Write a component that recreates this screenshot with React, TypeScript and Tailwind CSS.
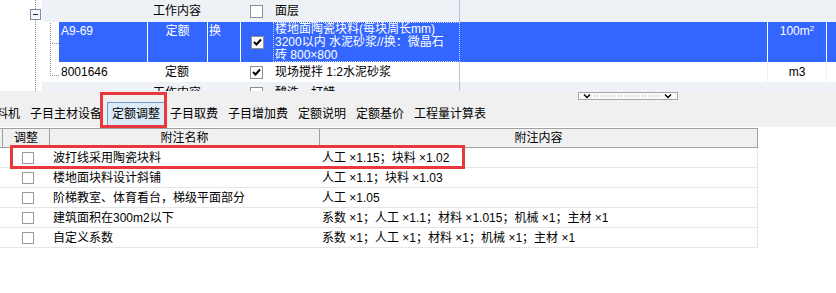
import React from "react";

const FONT = "font-['Liberation_Sans','Noto_Sans_CJK_SC',sans-serif]";

function Check({ checked }: { checked: boolean }) {
  return (
    <div className="w-[13px] h-[13px] border border-[#8e8f8f] bg-white flex items-center justify-center shrink-0">
      {checked && (
        <svg width="9" height="8" viewBox="0 0 9 8">
          <path d="M1 4 L3.5 6.5 L8 1.5" stroke="#000" strokeWidth="2" fill="none" />
        </svg>
      )}
    </div>
  );
}

function Box() {
  return <div className="w-[12px] h-[12px] border border-[#9a9a9a] bg-white shrink-0" />;
}

const rows = [
  { name: "波打线采用陶瓷块料", content: "人工 ×1.15；块料 ×1.02" },
  { name: "楼地面块料设计斜铺", content: "人工 ×1.1；块料 ×1.03" },
  { name: "阶梯教室、体育看台，梯级平面部分", content: "人工 ×1.05" },
  { name: "建筑面积在300m2以下", content: "系数 ×1；人工 ×1.1；材料 ×1.015；机械 ×1；主材 ×1" },
  { name: "自定义系数", content: "系数 ×1；人工 ×1；材料 ×1；机械 ×1；主材 ×1" },
];

const tabs = ["子目取费", "子目增加费", "定额说明", "定额基价", "工程量计算表"];

export default function App() {
  return (
    <div className={`relative w-[836px] h-[293px] bg-white overflow-hidden text-[12px] text-black ${FONT}`}>
      {/* top tree grid */}
      <div className="relative h-[91px] overflow-hidden">
        <div className="flex flex-col">
          {/* row 1 */}
          <div className="flex h-[22px] ml-[42px] bg-[#eef1f6] items-center whitespace-nowrap">
            <div className="w-[105px] shrink-0" />
            <div className="w-[60px] shrink-0 text-center">工作内容</div>
            <div className="w-[33px] shrink-0" />
            <div className="w-[33px] shrink-0 flex justify-center"><Check checked={false} /></div>
            <div className="w-[187px] shrink-0 h-full pl-[2px] leading-[22px] border-r border-[#b8c4d4]">面层</div>
          </div>
          {/* row 2 selected */}
          <div className="flex h-[40px] ml-[59px] bg-[#3366ff] text-white whitespace-nowrap">
            <div className="w-[88px] shrink-0 pl-[2px] pt-[2px] leading-[14px]">A9-69</div>
            <div className="w-[60px] shrink-0 border-l border-white text-center pt-[2px] leading-[14px]">定额</div>
            <div className="w-[33px] shrink-0 border-l border-white pl-[1px] pt-[2px] leading-[14px]">换</div>
            <div className="w-[33px] shrink-0 border-l border-white flex items-center justify-center"><Check checked={true} /></div>
            <div className="w-[187px] shrink-0 border border-dotted border-[#c9d6ff] pl-[1px] leading-[13px] text-[12px]">
              <div>楼地面陶瓷块料(每块周长mm)</div>
              <div>3200以内 水泥砂浆//换：微晶石</div>
              <div>砖 800×800</div>
            </div>
            <div className="w-[307px] shrink-0" />
            <div className="w-[59px] shrink-0 border-l border-white text-center pt-[2px] leading-[14px]">
              100m<sup className="text-[8px]">2</sup>
            </div>
            <div className="flex-1 border-l border-white" />
          </div>
          {/* row 3 */}
          <div className="flex h-[20px] ml-[59px] bg-white items-center whitespace-nowrap">
            <div className="w-[88px] shrink-0 pl-[2px]">8001646</div>
            <div className="w-[60px] shrink-0 text-center">定额</div>
            <div className="w-[33px] shrink-0" />
            <div className="w-[33px] shrink-0 flex justify-center"><Check checked={true} /></div>
            <div className="w-[187px] shrink-0 h-full pl-[2px] leading-[20px] border-r border-[#b8c4d4]">现场搅拌 1:2水泥砂浆</div>
            <div className="w-[307px] shrink-0 h-full" />
            <div className="w-[59px] shrink-0 h-full leading-[20px] border-l border-[#f0f0f0] text-center">m3</div>
            <div className="flex-1 h-full border-l border-[#f0f0f0]" />
          </div>
          {/* row 4 */}
          <div className="flex h-[22px] ml-[42px] bg-[#eef1f6] items-center whitespace-nowrap">
            <div className="w-[105px] shrink-0" />
            <div className="w-[60px] shrink-0 text-center">工作内容</div>
            <div className="w-[33px] shrink-0" />
            <div className="w-[33px] shrink-0 flex justify-center"><Check checked={false} /></div>
            <div className="w-[187px] shrink-0 h-full pl-[2px] leading-[22px] border-r border-[#b8c4d4]">酸洗、打蜡</div>
          </div>
        </div>
        {/* tree lines */}
        <svg className="absolute left-0 top-0" width="60" height="91">
          <line x1="35.5" y1="0" x2="35.5" y2="91" stroke="#8a8a8a" strokeDasharray="1 1" />
          <line x1="50.5" y1="23" x2="50.5" y2="75" stroke="#8a8a8a" strokeDasharray="1 1" />
          <line x1="50" y1="43.5" x2="59" y2="43.5" stroke="#8a8a8a" strokeDasharray="1 1" />
          <line x1="50" y1="75.5" x2="59" y2="75.5" stroke="#8a8a8a" strokeDasharray="1 1" />
          <rect x="30.5" y="9.5" width="10" height="10" fill="#f4f6fa" stroke="#7d8aa3" />
          <line x1="33" y1="14.5" x2="38" y2="14.5" stroke="#1f2a44" />
        </svg>
      </div>

      {/* splitter */}
      <div className="h-[9px] bg-[#f0f0f0] flex">
        <div className="ml-[578px] mt-[1px]">
          <svg width="100" height="8" viewBox="0 0 100 8">
            <rect x="0.5" y="0.5" width="99" height="7" fill="#fafafa" stroke="#a8a8a8" />
            <path d="M6 2.5 L9 5.5 L12 2.5" stroke="#000" strokeWidth="1.4" fill="none" />
            <path d="M87 2.5 L90 5.5 L93 2.5" stroke="#000" strokeWidth="1.4" fill="none" />
            <line x1="16" y1="4" x2="84" y2="4" stroke="#9a9a9a" strokeDasharray="1 2" />
          </svg>
        </div>
      </div>

      {/* toolbar */}
      <div className="h-[27px] bg-[#f0f0f0] flex items-center whitespace-nowrap overflow-hidden">
        <div className="ml-[-9px] px-[5px]">料机</div>
        <div className="px-[5px]">子目主材设备</div>
        <div className="h-[24px] px-[4px] border border-[#6d9ccc] bg-[#dcebf8] flex items-center">定额调整</div>
        {tabs.map((t) => (
          <div key={t} className="px-[5px] first:ml-[1px]">{t}</div>
        ))}
      </div>

      {/* adjustment table */}
      <div className="w-[758px] mt-[1px]">
        <div className="flex h-[20px] bg-[#f0f0f0] border-y border-[#a0a0a0] border-r items-center whitespace-nowrap">
          <div className="w-[3px] h-full border-r border-[#a0a0a0] shrink-0" />
          <div className="w-[47px] h-full border-r border-[#a0a0a0] shrink-0 text-center leading-[18px]">调整</div>
          <div className="w-[270px] h-full border-r border-[#a0a0a0] shrink-0 text-center leading-[18px]">附注名称</div>
          <div className="flex-1 text-center leading-[18px]">附注内容</div>
        </div>
        {rows.map((r) => (
          <div key={r.name} className="flex h-[20px] border-b border-r border-[#e6e6e6] items-center whitespace-nowrap">
            <div className="w-[50px] shrink-0 flex pl-[22px]"><Box /></div>
            <div className="w-[270px] shrink-0 pl-[3px]">{r.name}</div>
            <div className="flex-1 pl-[2px]">{r.content}</div>
          </div>
        ))}
      </div>

      {/* red annotation boxes */}
      <div className="absolute left-[100px] top-[92px] w-[67px] h-[36px] border-[3px] border-[#e8383d]" />
      <div className="absolute left-[10px] top-[145px] w-[455px] h-[24px] border-[3px] border-[#e8383d]" />
    </div>
  );
}
